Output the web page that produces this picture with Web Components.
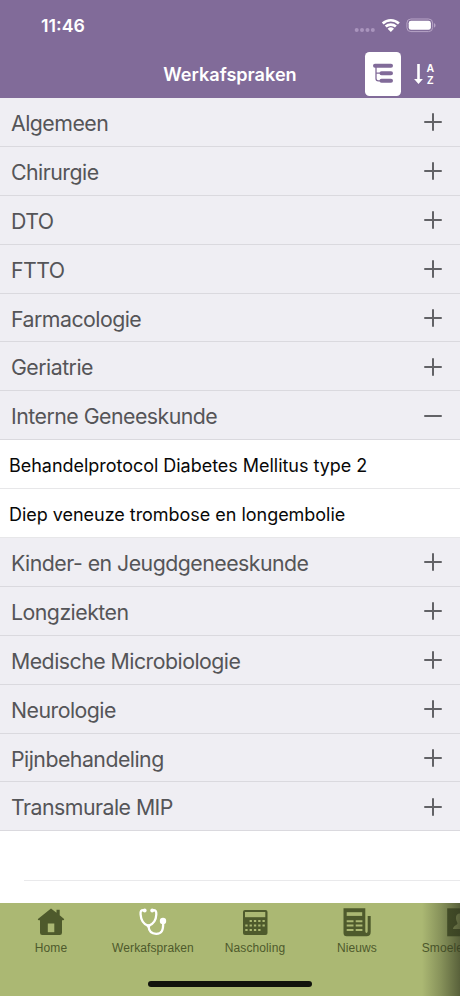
<!DOCTYPE html>
<html lang="nl">
<head>
<meta charset="utf-8">
<title>Werkafspraken</title>
<style>
html, body {
  margin: 0;
  height: 100%;
  overflow: hidden;
  background: #fff;
  font-family: Inter, "Liberation Sans", sans-serif;
}
</style>
</head>
<body>
<protocol-app></protocol-app>

<script>
const icons = {
  home: `<svg width="28" height="28" viewBox="0 0 28 28"><path fill="currentColor" d="M14 .4 1.200 10.800c-.7.7-.3 1.500.7 1.500H3V24.700Q3 26.900 5.200 26.900H22.800Q25 26.900 25 24.700V12.300h1.100c1 0 1.400-.8.700-1.500L22.700 7.300V1.800h-3.200v2.900z"/><path fill="#abb873" d="M10.800 15.500h6.500v8.700h-6.500z"/></svg>`,
  stethoscope: `<svg width="28" height="28" viewBox="0 0 28 28"><g fill="none" stroke="currentColor" stroke-width="2.300" stroke-linecap="round"><path d="M5.500 2.300C1.800 1.600 1.300 3.500 1.600 6.500c.3 4.800 1.500 9.300 7.700 11.500 6.500-2.200 7.800-6.500 8-11.500.2-3-.5-4.900-4-4.200"/><path d="M9.500 18c.3 5 2.500 7.800 7.700 7.800 6 0 7-4 7-10.500"/></g><g fill="currentColor"><circle cx="5.700" cy="2.500" r="1.900"/><circle cx="13.200" cy="2.500" r="1.900"/><circle cx="24" cy="13" r="3.200"/><path d="M6 16.300h7l-3.500 4.200z"/></g></svg>`,
  calculator: `<svg width="28" height="28" viewBox="0 0 28 28"><rect x="2" y="2" width="24.500" height="25" rx="2" fill="currentColor"/><path fill="#abb873" d="M4 4h20.300v5.200H4z"/><g fill="none" stroke="#abb873" stroke-width="2" stroke-dasharray="2.300 2"><path d="M8.600 13h15.500M4.300 17.500h19.800M4.300 22h15.500"/></g></svg>`,
  news: `<svg width="28" height="29" viewBox="0 0 28 29"><path fill="currentColor" d="M.5.300h21.800v22.500c0 3 2.400 3 2.400 0V8h3v16c0 3-1.500 4.300-4.200 4.300H3.700C1.500 28.300.5 27 .5 25z"/><g fill="#abb873"><path d="M3.700 4.200h15.500v3.700H3.700z"/><path d="M3.700 12.300h6.800v2H3.700zM12.700 12.300h6.700v2h-6.700zM3.700 16.600h6.800v2H3.700zM12.700 16.600h6.700v2h-6.700zM3.700 20.900h6.800v2H3.700zM12.700 20.900h6.700v2h-6.700z"/></g></svg>`,
  faces: `<svg width="28" height="29" viewBox="0 0 28 29"><path fill="currentColor" d="M2.200.300H28v28H2.200z"/><path fill="#abb873" d="M15 5.500c-3 0-4.200 2-4 5 .2 2.500 1.500 3.500 1.500 5-.2 1.500-4 2-4.500 5.500H24c-.5-4-4.500-4-4.800-5.500 0-1.500 1.400-2.500 1.500-5C20.800 7.500 19 5.500 15 5.500z"/></svg>`,
};

class StatusBar extends HTMLElement {
  constructor() {
    super();
    this.attachShadow({ mode: 'open' }).innerHTML = `
<style>
:host {
  display: flex;
  justify-content: space-between;
  box-sizing: border-box;
  height: 50px;
  padding: 15px 24px 0 41px;
  color: #fff;
}
.time {
  font-size: 17.8px;
  line-height: 22px;
  font-weight: 600;
}
.indicators {
  display: flex;
  align-items: flex-start;
}
svg { display: block; }
</style>
<span class="time"><slot></slot></span>
<div class="indicators">
  <svg width="82" height="20" viewBox="354 15 82 20">
    <g fill="#a994bd">
      <circle cx="356.700" cy="30" r="2"/><circle cx="362" cy="30" r="2"/>
      <circle cx="367.500" cy="30" r="2"/><circle cx="372.800" cy="30" r="2"/>
    </g>
    <g fill="none" stroke="#fff" stroke-width="2.700">
      <path d="M382.700 23.400a12 12 0 0 1 16.200 0"/>
      <path d="M385.700 26.600a7.500 7.500 0 0 1 10.200 0"/>
    </g>
    <path fill="#fff" d="M387.600 28.700a4.700 4.700 0 0 1 6.400 0l-3.200 3.300z"/>
    <rect x="406.900" y="19" width="25.700" height="12.600" rx="4" fill="none" stroke="#b7a4c6"/>
    <rect x="408.700" y="20.800" width="22.200" height="9" rx="2.400" fill="#fff"/>
    <path fill="#b7a4c6" d="M434 23.200c2 .5 2 3.700 0 4.200z"/>
  </svg>
</div>`;
  }
}
customElements.define('status-bar', StatusBar);

class NavBar extends HTMLElement {
  constructor() {
    super();
    this.attachShadow({ mode: 'open' }).innerHTML = `
<style>
:host {
  display: grid;
  grid-template-columns: 1fr auto 1fr;
  align-items: center;
  height: 48px;
  color: #fff;
}
h1 {
  grid-column: 2;
  margin: 0;
  font-size: 18.1px;
  line-height: 24px;
  font-weight: 600;
}
.actions {
  display: flex;
  align-items: center;
  justify-content: flex-end;
  gap: 12px;
  padding-right: 23px;
}
button {
  display: block;
  margin: 0;
  padding: 0;
  border: 0;
  background: none;
}
.selected {
  width: 36px;
  height: 44px;
  border-radius: 4.5px;
  background: #fff;
}
svg { display: block; }
</style>
<h1><slot></slot></h1>
<div class="actions">
  <button class="selected" aria-label="Boom">
    <svg width="36" height="44" viewBox="0 0 36 44">
      <g fill="none" stroke="#816b99" stroke-linecap="round">
        <path stroke-width="4" d="M10 13.700h16M16.500 21.200h9.500M16.500 28.800h9.500"/>
        <path stroke-width="1.300" d="M11 15v11.500q0 2.300 2.300 2.300H16M11 21.200h5"/>
      </g>
    </svg>
  </button>
  <button aria-label="Sorteren">
    <svg width="24" height="44" viewBox="0 0 24 44">
      <path fill="#fff" d="M4.200 12h2.600v15h3.100L5.500 32 1.100 27h3.100z"/>
      <g fill="#fff" font-family="Liberation Sans, sans-serif" font-size="10.600" font-weight="700" text-anchor="middle">
        <text x="17.300" y="20">A</text>
        <text x="17.300" y="32.300">Z</text>
      </g>
    </svg>
  </button>
</div>`;
  }
}
customElements.define('nav-bar', NavBar);

class AccordionSection extends HTMLElement {
  constructor() {
    super();
    this.attachShadow({ mode: 'open' }).innerHTML = `
<style>
:host { display: block; }
.header {
  display: flex;
  align-items: center;
  justify-content: space-between;
  box-sizing: border-box;
  height: 48.9px;
  padding: 2px 17px 0 11px;
  border-bottom: 1px solid #dad9de;
  background: #efeef3;
  color: #555558;
  font-size: 21.3px;
  letter-spacing: -0.52px;
}
svg { display: block; margin-top: -1px; }
.items { display: none; }
:host([open]) .items { display: block; }
:host([open]) .vertical { display: none; }
</style>
<div class="header">
  <span class="label"></span>
  <svg width="20" height="20" viewBox="0 0 20 20" stroke="#626266" stroke-width="2" stroke-linecap="round">
    <path d="M2 10h16"/><path class="vertical" d="M10 2v16"/>
  </svg>
</div>
<div class="items"><slot></slot></div>`;
  }

  connectedCallback() {
    this.shadowRoot.querySelector('.label').textContent = this.getAttribute('label');
    this.shadowRoot.querySelector('.header').onclick = () => this.toggleAttribute('open');
  }
}
customElements.define('accordion-section', AccordionSection);

class ProtocolRow extends HTMLElement {
  constructor() {
    super();
    this.attachShadow({ mode: 'open' }).innerHTML = `
<style>
:host {
  display: flex;
  align-items: center;
  box-sizing: border-box;
  height: 48.9px;
  padding: 2px 10px 0 9px;
  border-bottom: 1px solid #e7e7e9;
  background: #fff;
  color: #080808;
  font-size: 18px;
  letter-spacing: -0.03px;
}
</style>
<slot></slot>`;
  }
}
customElements.define('protocol-row', ProtocolRow);

class TabItem extends HTMLElement {
  constructor() {
    super();
    this.attachShadow({ mode: 'open' }).innerHTML = `
<style>
:host {
  display: flex;
  flex: 0 0 102px;
  flex-direction: column;
  align-items: center;
  color: #4e5a2c;
  font: 12px/14px "Liberation Sans", sans-serif;
  letter-spacing: 0.1px;
}
.icon { height: 33px; }
:host([active]) .icon { color: #fff; }
svg { display: block; }
</style>
<div class="icon"></div>
<span><slot></slot></span>`;
  }

  connectedCallback() {
    this.shadowRoot.querySelector('.icon').innerHTML = icons[this.getAttribute('icon')];
  }
}
customElements.define('tab-item', TabItem);

class TabBar extends HTMLElement {
  constructor() {
    super();
    this.attachShadow({ mode: 'open' }).innerHTML = `
<style>
:host {
  display: block;
  position: relative;
  height: 93px;
  overflow: hidden;
  background: #abb873;
}
.tabs {
  display: flex;
  padding-top: 5px;
}
/* hint that the bar scrolls on */
.fade {
  position: absolute;
  top: 0;
  right: 0;
  width: 38px;
  height: 100%;
  background: linear-gradient(to right, rgba(50, 56, 32, 0), rgba(50, 56, 32, .3) 50%, rgba(50, 56, 32, .68));
}
.grabber {
  position: absolute;
  left: 148px;
  bottom: 9px;
  width: 164px;
  height: 6px;
  border-radius: 3px;
  background: #11130c;
}
</style>
<div class="tabs"><slot></slot></div>
<div class="fade"></div>
<div class="grabber"></div>`;
  }
}
customElements.define('tab-bar', TabBar);

class ProtocolApp extends HTMLElement {
  constructor() {
    super();
    this.attachShadow({ mode: 'open' }).innerHTML = `
<style>
:host {
  display: flex;
  flex-direction: column;
  height: 996px;
  width: 460px;
}
header {
  height: 98px;
  background: #816b99;
}
main {
  flex: 1;
  overflow: hidden;
}
.empty {
  height: 48.500px;
  margin-left: 24px;
  border-bottom: 1px solid #e9e9eb;
}
</style>
<header>
  <status-bar>11:46</status-bar>
  <nav-bar>Werkafspraken</nav-bar>
</header>
<main>
  <accordion-section label="Algemeen"></accordion-section>
  <accordion-section label="Chirurgie"></accordion-section>
  <accordion-section label="DTO"></accordion-section>
  <accordion-section label="FTTO"></accordion-section>
  <accordion-section label="Farmacologie"></accordion-section>
  <accordion-section label="Geriatrie"></accordion-section>
  <accordion-section label="Interne Geneeskunde" open>
    <protocol-row>Behandelprotocol Diabetes Mellitus type 2</protocol-row>
    <protocol-row>Diep veneuze trombose en longembolie</protocol-row>
  </accordion-section>
  <accordion-section label="Kinder- en Jeugdgeneeskunde"></accordion-section>
  <accordion-section label="Longziekten"></accordion-section>
  <accordion-section label="Medische Microbiologie"></accordion-section>
  <accordion-section label="Neurologie"></accordion-section>
  <accordion-section label="Pijnbehandeling"></accordion-section>
  <accordion-section label="Transmurale MIP"></accordion-section>
  <div class="empty"></div>
</main>
<tab-bar>
  <tab-item icon="home">Home</tab-item>
  <tab-item icon="stethoscope" active>Werkafspraken</tab-item>
  <tab-item icon="calculator">Nascholing</tab-item>
  <tab-item icon="news">Nieuws</tab-item>
  <tab-item icon="faces">Smoelenboek</tab-item>
</tab-bar>`;
  }
}
customElements.define('protocol-app', ProtocolApp);
</script>
</body>
</html>
